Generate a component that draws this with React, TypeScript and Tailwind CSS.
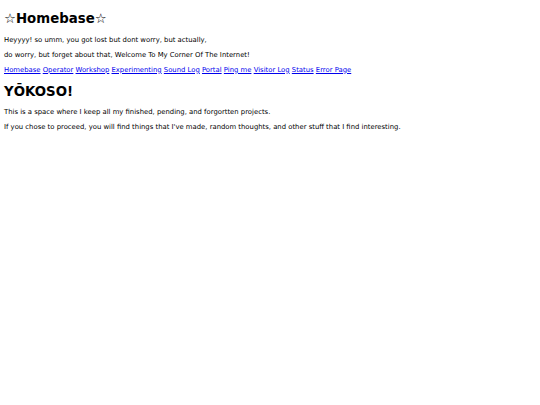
const links = [
  "Homebase",
  "Operator",
  "Workshop",
  "Experimenting",
  "Sound Log",
  "Portal",
  "Ping me",
  "Visitor Log",
  "Status",
  "Error Page",
];

export default function App() {
  return (
    <div className="min-h-[405px] w-[540px] bg-white px-[4px] pt-[10.5px] font-['DejaVu_Sans',sans-serif] text-black">
      <h1 className="text-[13.33px] font-bold leading-[15.5px]">☆Homebase☆</h1>
      <p className="mt-[10.8px] text-[6.85px] leading-[7.8px]">
        Heyyyy! so umm, you got lost but dont worry, but actually,
      </p>
      <p className="mt-[7.2px] text-[6.85px] leading-[7.8px]">
        do worry, but forget about that, Welcome To My Corner Of The Internet!
      </p>
      <nav className="mt-[7.2px] text-[6.85px] leading-[7.8px]">
        {links.map((name, i) => (
          <span key={name}>
            <a href="#" className="text-[#0000ee] underline">
              {name}
            </a>
            {i < links.length - 1 ? " " : ""}
          </span>
        ))}
      </nav>
      <h1 className="mt-[9.4px] text-[13.33px] font-bold leading-[15.5px]">YŌKOSO!</h1>
      <p className="mt-[9.3px] text-[6.85px] leading-[7.8px]">
        This is a space where I keep all my finished, pending, and forgortten projects.
      </p>
      <p className="mt-[7.2px] text-[6.85px] leading-[7.8px]">
        If you chose to proceed, you will find things that I've made, random thoughts, and other stuff that I find interesting.
      </p>
    </div>
  );
}
